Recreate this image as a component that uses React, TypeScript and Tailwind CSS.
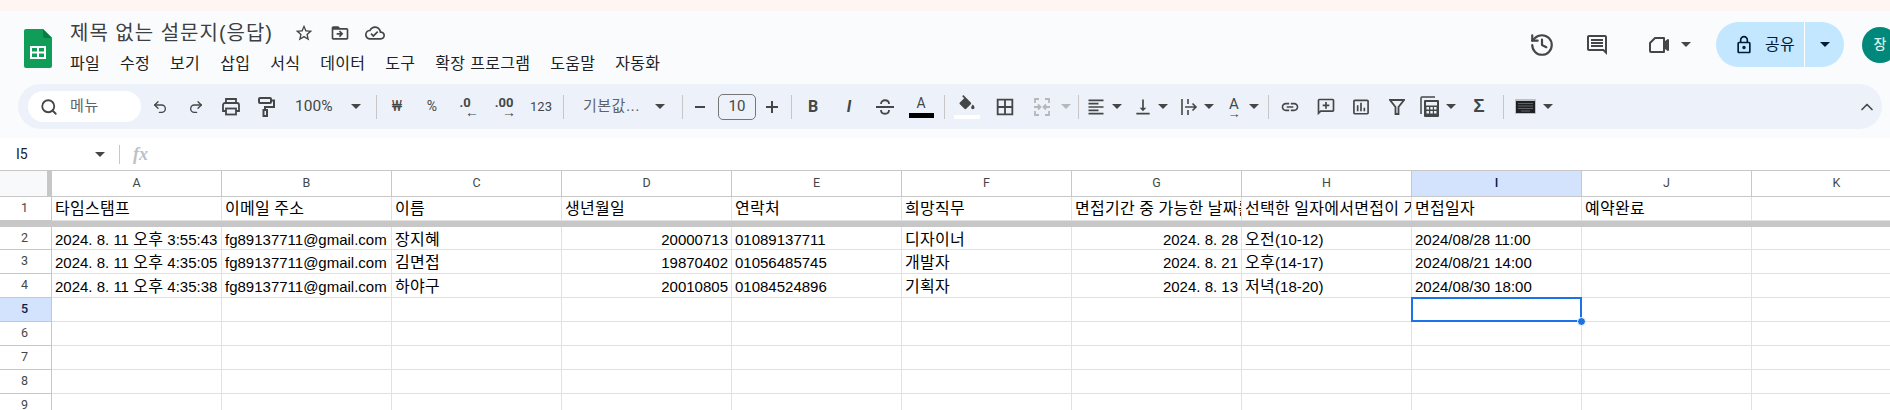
import type { ReactNode } from "react"
import { ChevronUp, History, Redo2, Search, Undo2 } from "lucide-react"

const Caret = ({ className = "fill-[#444746]" }: { className?: string }) => (
    <svg width="10" height="5" viewBox="0 0 10 5" className={className}>
        <path d="M0 0h10L5 5z" />
    </svg>
)

// material style icon, filled path on a 24 box
const Mi = ({ d, size = 20, className = "fill-[#444746]" }: { d: string; size?: number; className?: string }) => (
    <svg width={size} height={size} viewBox="0 0 24 24" className={className}>
        <path d={d} />
    </svg>
)

const Slot = ({ className, children }: { className: string; children?: ReactNode }) => (
    <div className={`flex h-full shrink-0 items-center justify-center ${className}`}>{children}</div>
)

const Sep = ({ className }: { className: string }) => (
    <Slot className={className}>
        <div className="h-[24px] w-px bg-[#c7c7c7]"></div>
    </Slot>
)

const icons = {
    star: "M22 9.24l-7.19-.62L12 2 9.19 8.63 2 9.24l5.46 4.73L5.82 21 12 17.27 18.18 21l-1.63-7.03L22 9.24zM12 15.4l-3.76 2.27 1-4.28-3.32-2.88 4.38-.38L12 6.1l1.71 4.04 4.38.38-3.32 2.88 1 4.28L12 15.4z",
    folder: "M20 6h-8l-2-2H4c-1.1 0-2 .9-2 2v12c0 1.1.9 2 2 2h16c1.1 0 2-.9 2-2V8c0-1.1-.9-2-2-2zm0 12H4V8h16v10zm-8.01-9l-1.41 1.41L12.16 12H8v2h4.16l-1.59 1.59L11.99 17 16 13.01 11.99 9z",
    cloud: "M19.35 10.04C18.67 6.59 15.64 4 12 4 9.11 4 6.6 5.64 5.35 8.04 2.34 8.36 0 10.91 0 14c0 3.31 2.69 6 6 6h13c2.76 0 5-2.24 5-5 0-2.64-2.05-4.78-4.65-4.96zM19 18H6c-2.21 0-4-1.79-4-4 0-2.05 1.53-3.76 3.56-3.97l1.07-.11.5-.95C8.08 7.14 9.94 6 12 6c2.62 0 4.88 1.86 5.39 4.43l.3 1.5 1.53.11c1.56.1 2.78 1.41 2.78 2.96 0 1.65-1.35 3-3 3zm-9-3.82l-2.09-2.09L6.5 13.5 10 17l6.01-6.01-1.41-1.41z",
    comment: "M21.99 4c0-1.1-.89-2-1.99-2H4c-1.1 0-2 .9-2 2v12c0 1.1.9 2 2 2h14l4 4-.01-18zM20 4v13.17L18.83 16H4V4h16zM6 12h12v2H6zm0-3h12v2H6zm0-3h12v2H6z",
    lock: "M18 8h-1V6c0-2.76-2.24-5-5-5S7 3.24 7 6v2H6c-1.1 0-2 .9-2 2v10c0 1.1.9 2 2 2h12c1.1 0 2-.9 2-2V10c0-1.1-.9-2-2-2zM9 6c0-1.66 1.34-3 3-3s3 1.34 3 3v2H9V6zm9 14H6V10h12v10zm-6-3c1.1 0 2-.9 2-2s-.9-2-2-2-2 .9-2 2 .9 2 2 2z",
    fill: "M16.56 8.94L7.62 0 6.21 1.41l2.38 2.38-5.15 5.15c-.59.59-.59 1.54 0 2.12l5.5 5.5c.29.29.68.44 1.06.44s.77-.15 1.06-.44l5.5-5.5c.59-.58.59-1.53 0-2.12zM19 11.5s-2 2.17-2 3.5c0 1.1.9 2 2 2s2-.9 2-2c0-1.33-2-3.5-2-3.5z",
    borders: "M3 3v18h18V3H3zm8 16H5v-6h6v6zm0-8H5V5h6v6zm8 8h-6v-6h6v6zm0-8h-6V5h6v6z",
    align: "M15 15H3v2h12v-2zm0-8H3v2h12V7zM3 13h18v-2H3v2zm0 8h18v-2H3v2zM3 3v2h18V3H3z",
    valign: "M16 13h-3V3h-2v10H8l4 4 4-4zM4 19v2h16v-2H4z",
    link: "M3.9 12c0-1.71 1.39-3.1 3.1-3.1h4V7H7c-2.76 0-5 2.24-5 5s2.24 5 5 5h4v-1.9H7c-1.71 0-3.1-1.39-3.1-3.1zM8 13h8v-2H8v2zm9-6h-4v1.9h4c1.71 0 3.1 1.39 3.1 3.1s-1.39 3.1-3.1 3.1h-4V17h4c2.76 0 5-2.24 5-5s-2.24-5-5-5z",
    addComment: "M20 2H4c-1.1 0-2 .9-2 2v18l4-4h14c1.1 0 2-.9 2-2V4c0-1.1-.9-2-2-2zm0 14H5.17L4 17.17V4h16v12zm-9-2h2v-3h3V9h-3V6h-2v3H8v2h3z",
    chart: "M9 17H7v-7h2v7zm4 0h-2V7h2v10zm4 0h-2v-4h2v4zm2.5 2.1h-15V5h15v14.1zm0-16.1h-15c-1.1 0-2 .9-2 2v14c0 1.1.9 2 2 2h15c1.1 0 2-.9 2-2V5c0-1.1-.9-2-2-2z",
}

const SheetsLogo = () => (
    <svg width="28" height="39" viewBox="0 0 28 39" className="shrink-0">
        <path d="M2 0h17l9 9v28a2 2 0 0 1-2 2H2a2 2 0 0 1-2-2V2a2 2 0 0 1 2-2z" fill="#0f9d58" />
        <path d="M19 0l9 9h-7a2 2 0 0 1-2-2z" fill="#0b7a44" />
        <path d="M6 17h16v13H6zm2 2v3.5h5V19zm7 0v3.5h5V19zm-7 5.500V28h5v-3.500zm7 0V28h5v-3.500z" fill="#fff" fillRule="evenodd" />
    </svg>
)

const PaintIcon = () => (
    <svg width="18" height="20" viewBox="0 0 18 20" fill="none" stroke="#444746" strokeWidth="2">
        <rect x="2" y="1" width="12" height="5" rx="1" />
        <path d="M14 3.500h3V10H8v3" />
        <rect x="6.500" y="13" width="3.500" height="6" />
    </svg>
)

const PrintIcon = () => (
    <svg width="20" height="20" viewBox="0 0 20 20" fill="none" stroke="#444746" strokeWidth="1.800">
        <path d="M5 6V2h10v4" />
        <path d="M5 14H2V8a2 2 0 0 1 2-2h12a2 2 0 0 1 2 2v6h-3" />
        <rect x="5" y="11.500" width="10" height="6" />
    </svg>
)

const MeetIcon = () => (
    <svg width="24" height="24" viewBox="0 0 24 24" fill="none" stroke="#444746" strokeWidth="2" strokeLinejoin="round">
        <path d="M8 5h9v14H4a1 1 0 0 1-1-1V10z" />
        <path d="M17 10l4-3v10l-4-3z" fill="#444746" />
    </svg>
)

const MergeIcon = () => (
    <svg width="18" height="20" viewBox="0 0 18 20" fill="none" stroke="#b5b8bb" strokeWidth="1.800">
        <path d="M6 2H2v4M12 2h4v4M6 18H2v-4M12 18h4v-4" />
        <path d="M1 10h6M5 7.500L7.500 10 5 12.500M17 10h-6M13 7.500L10.500 10 13 12.500" />
    </svg>
)

const WrapIcon = () => (
    <svg width="18" height="18" viewBox="0 0 18 18" fill="none" stroke="#444746" strokeWidth="1.600">
        <path d="M2 1v16M8 1v5M8 12v5M5 9h11M12.500 5.500L16 9l-3.500 3.500" />
    </svg>
)

const StrikeIcon = () => (
    <svg width="18" height="18" viewBox="0 0 18 18" fill="none" stroke="#444746" strokeWidth="1.800">
        <path d="M5 6c0-5 8-5 8 0M0 9h18M5 12c0 5 8 5 8 0" />
    </svg>
)

const FilterIcon = () => (
    <svg width="16" height="18" viewBox="0 0 16 18" fill="none" stroke="#444746" strokeWidth="1.800">
        <path d="M1 2h14L9.500 9v7h-3V9z" />
    </svg>
)

const FunctionsIcon = () => (
    <svg width="20" height="22" viewBox="0 0 20 22" fill="none">
        <path d="M1 18V2a1 1 0 0 1 1-1h13" stroke="#444746" strokeWidth="1.500" />
        <rect x="4" y="4" width="15" height="17" rx="1" fill="#444746" />
        <rect x="6" y="6" width="11" height="3.500" fill="#edf2fa" />
        <path d="M6.500 11h2.500v2.500H6.500zM10.300 11h2.500v2.500h-2.500zM14 11h2.500v2.500H14zM6.500 15h2.500v2.500H6.500zM10.300 15h2.500v2.500h-2.500zM14 15h2.500v2.500H14z" fill="#edf2fa" />
    </svg>
)

const KeyboardIcon = () => (
    <svg width="21" height="15" viewBox="0 0 21 15">
        <rect width="21" height="15" rx="1" fill="#bdc1c6" />
        <rect x="1" y="2" width="19" height="12" fill="#202124" />
        <path d="M3 4h15v1H3zM3 6.500h15v1H3zM3 9h15v1H3zM6 11.500h9v1H6z" fill="#5f6368" />
    </svg>
)

const Toolbar = () => (
    <div className="ml-[18px] mr-[8px] flex h-[45px] items-center rounded-full bg-[#edf2fa] pl-[10px] text-[#444746]">
        <div className="flex h-[31px] w-[113px] shrink-0 items-center rounded-full bg-white pl-[12px]">
            <Search size={18} strokeWidth={2.4} className="text-[#444746]" />
            <span className="ml-[12px] text-[15px] tracking-[0.6px] text-[#5f6368]">메뉴</span>
        </div>
        <Slot className="w-[38px]"><Undo2 size={16} strokeWidth={2} /></Slot>
        <Slot className="w-[34px]"><Redo2 size={16} strokeWidth={2} /></Slot>
        <Slot className="w-[36px]"><PrintIcon /></Slot>
        <Slot className="w-[34px]"><PaintIcon /></Slot>
        <Slot className="w-[63px] justify-start pl-[12px] font-['Roboto',sans-serif] text-[15.500px]">100%</Slot>
        <Slot className="w-[20px]"><Caret /></Slot>
        <Sep className="w-[20px]" />
        <Slot className="w-[22px] font-['Roboto',sans-serif] text-[14px]">₩</Slot>
        <Slot className="w-[48px] font-['Roboto',sans-serif] text-[14px]">%</Slot>
        <Slot className="w-[24px]">
            <div className="flex flex-col items-center font-['Roboto',sans-serif] text-[13px] font-bold leading-[11px]">
                <span className="ml-[-6px]">.0</span>
                <span className="ml-[8px] text-[14px] leading-[8px]">←</span>
            </div>
        </Slot>
        <Slot className="w-[48px]">
            <div className="flex flex-col items-center font-['Roboto',sans-serif] text-[13px] font-bold leading-[11px]">
                <span>.00</span>
                <span className="ml-[10px] text-[14px] leading-[8px]">→</span>
            </div>
        </Slot>
        <Slot className="w-[26px] font-['Roboto',sans-serif] text-[13px]">123</Slot>
        <Sep className="w-[18px]" />
        <Slot className="w-[78px] justify-start overflow-hidden whitespace-nowrap pl-[11px] text-[15px] tracking-[0.5px] text-[#5f6368]">기본값...</Slot>
        <Slot className="w-[20px]"><Caret /></Slot>
        <Sep className="w-[24px]" />
        <Slot className="w-[12px]"><div className="h-[2px] w-[10px] bg-[#444746]"></div></Slot>
        <div className="ml-[12px] flex h-[26px] w-[38px] shrink-0 items-center justify-center rounded-[5px] border border-[#747775] font-['Roboto',sans-serif] text-[15px]">10</div>
        <Slot className="w-[32px]">
            <svg width="12" height="12" viewBox="0 0 12 12" className="fill-[#444746]"><path d="M5 0h2v5h5v2H7v5H5V7H0V5h5z" /></svg>
        </Slot>
        <Sep className="w-[6px]" />
        <Slot className="w-[38px] font-['Roboto',sans-serif] text-[16px] font-bold">B</Slot>
        <Slot className="w-[34px] font-['Roboto',sans-serif] text-[16px] font-bold italic">I</Slot>
        <Slot className="w-[38px]"><StrikeIcon /></Slot>
        <Slot className="w-[34px]">
            <div className="flex flex-col items-center">
                <span className="font-['Roboto',sans-serif] text-[14px] leading-[15px]">A</span>
                <div className="mt-[2px] h-[5px] w-[25px] bg-black"></div>
            </div>
        </Slot>
        <Sep className="w-[12px]" />
        <Slot className="w-[34px]">
            <div className="flex flex-col items-center">
                <Mi d={icons.fill} size={20} />
                <div className="h-[4px] w-[26px] bg-white"></div>
            </div>
        </Slot>
        <Slot className="w-[42px]"><Mi d={icons.borders} size={22} /></Slot>
        <Slot className="w-[32px]"><MergeIcon /></Slot>
        <Slot className="w-[16px]"><Caret className="fill-[#b5b8bb]" /></Slot>
        <Sep className="w-[8px]" />
        <Slot className="w-[28px]"><Mi d={icons.align} /></Slot>
        <Slot className="w-[14px]"><Caret /></Slot>
        <Slot className="ml-[7px] w-[24px]"><Mi d={icons.valign} /></Slot>
        <Slot className="ml-[1px] w-[14px]"><Caret /></Slot>
        <Slot className="ml-[7px] w-[24px]"><WrapIcon /></Slot>
        <Slot className="ml-[1px] w-[14px]"><Caret /></Slot>
        <Slot className="ml-[6px] w-[24px]">
            <div className="flex flex-col items-center">
                <span className="font-['Roboto',sans-serif] text-[15px] leading-[14px]">A</span>
                <span className="h-[6px] font-['Roboto',sans-serif] text-[13px] leading-[6px]">→</span>
            </div>
        </Slot>
        <Slot className="ml-[1px] w-[14px]"><Caret /></Slot>
        <Sep className="w-[14px]" />
        <Slot className="w-[30px]"><Mi d={icons.link} /></Slot>
        <Slot className="w-[42px]"><Mi d={icons.addComment} /></Slot>
        <Slot className="w-[28px]"><Mi d={icons.chart} /></Slot>
        <Slot className="w-[44px]"><FilterIcon /></Slot>
        <Slot className="w-[22px]"><FunctionsIcon /></Slot>
        <Slot className="w-[20px]"><Caret /></Slot>
        <Slot className="w-[36px] font-['Liberation_Sans',sans-serif] text-[19px] font-bold">Σ</Slot>
        <Sep className="w-[12px]" />
        <Slot className="w-[32px]"><KeyboardIcon /></Slot>
        <Slot className="w-[14px]"><Caret /></Slot>
        <div className="ml-auto mr-[3px] flex h-full w-[24px] items-center justify-center">
            <ChevronUp size={20} strokeWidth={2} />
        </div>
    </div>
)

const menus = ["파일", "수정", "보기", "삽입", "서식", "데이터", "도구", "확장 프로그램", "도움말", "자동화"]

const Header = () => (
    <div className="flex h-[73px] items-start">
        <div className="ml-[24px] mt-[18px]">
            <SheetsLogo />
        </div>
        <div className="ml-[18px]">
            <div className="mt-[6px] flex h-[32px] items-center">
                <span className="w-[203px] whitespace-nowrap text-[20px] tracking-[1px] text-[#3c4043]">제목 없는 설문지(응답)</span>
                <div className="ml-[21px]"><Mi d={icons.star} /></div>
                <div className="ml-[16px]"><Mi d={icons.folder} /></div>
                <div className="ml-[15px]"><Mi d={icons.cloud} /></div>
            </div>
            <div className="mt-[3px] flex h-[24px] items-center gap-[20px] text-[16px] tracking-[0.3px] text-[#202124]">
                {menus.map((m) => (
                    <span key={m} className="whitespace-nowrap">{m}</span>
                ))}
            </div>
        </div>
        <div className="ml-auto mr-[-8px] mt-[11px] flex h-[45px] items-center">
            <History size={26} strokeWidth={2} className="text-[#444746]" />
            <div className="ml-[30px]"><Mi d={icons.comment} size={24} /></div>
            <div className="ml-[38px]"><MeetIcon /></div>
            <div className="ml-[10px]"><Caret /></div>
            <div className="ml-[25px] flex h-[45px] w-[128px] items-center rounded-full bg-[#c2e7ff] text-[#001d35]">
                <div className="flex h-full w-[89px] items-center border-r border-white pl-[18px]">
                    <Mi d={icons.lock} size={20} className="fill-[#001d35]" />
                    <span className="ml-[11px] text-[16px] tracking-[0.3px]">공유</span>
                </div>
                <div className="flex flex-1 items-center justify-center">
                    <Caret className="fill-[#001d35]" />
                </div>
            </div>
            <div className="ml-[18px] flex h-[36px] w-[36px] items-center justify-center rounded-full bg-[#00897b] text-[14px] font-medium text-[#d5f0ec]">장</div>
        </div>
    </div>
)

const FormulaBar = () => (
    <div className="flex h-[32px] items-center bg-white">
        <span className="ml-[16px] w-[79px] font-['Roboto',sans-serif] text-[14px] text-[#202124]">I5</span>
        <Caret />
        <div className="ml-[14px] h-[19px] w-px bg-[#c7c7c7]"></div>
        <span className="ml-[13px] font-['Liberation_Serif',serif] text-[18px] font-bold italic text-[#bdc1c6]">fx</span>
    </div>
)

const columns = ["A", "B", "C", "D", "E", "F", "G", "H", "I", "J", "K"]

type Row = { n: number; cells: (string | { right: string })[] }

const rows: Row[] = [
    { n: 2, cells: ["2024. 8. 11 오후 3:55:43", "fg89137711@gmail.com", "장지혜", { right: "20000713" }, "01089137711", "디자이너", { right: "2024. 8. 28" }, "오전(10-12)", "2024/08/28 11:00", "", ""] },
    { n: 3, cells: ["2024. 8. 11 오후 4:35:05", "fg89137711@gmail.com", "김면접", { right: "19870402" }, "01056485745", "개발자", { right: "2024. 8. 21" }, "오후(14-17)", "2024/08/21 14:00", "", ""] },
    { n: 4, cells: ["2024. 8. 11 오후 4:35:38", "fg89137711@gmail.com", "하야구", { right: "20010805" }, "01084524896", "기획자", { right: "2024. 8. 13" }, "저녁(18-20)", "2024/08/30 18:00", "", ""] },
]

const titles = ["타임스탬프", "이메일 주소", "이름", "생년월일", "연락처", "희망직무", "면접기간 중 가능한 날짜를 선택해주세요", "선택한 일자에서면접이 가능한 시간", "면접일자", "예약완료", ""]

// hangul runs are a bit wider in the sheet than the latin around them
const Ko = ({ text }: { text: string }) => (
    <>
        {text.split(/([가-힣]+)/).map((part, i) =>
            i % 2 === 1 ? <span key={i} className="text-[16px] tracking-[0.3px]">{part}</span> : part
        )}
    </>
)

const Cell = ({ text = "", right, title }: { text?: string; right?: boolean; title?: boolean }) => (
    <div className={`w-[170px] shrink-0 overflow-hidden whitespace-nowrap border-r border-b border-[#e1e1e1] px-[3px] text-[15px] leading-[22px] text-black ${title ? "pt-px" : "pt-[2px]"} ${right ? "text-right" : ""}`}>
        <Ko text={text} />
    </div>
)

const RowHead = ({ n, active }: { n: number; active?: boolean }) => (
    <div className={`flex w-[52px] shrink-0 items-center justify-center border-r border-b border-[#c7c7c7] pr-[2px] font-['Roboto',sans-serif] text-[12.500px] ${active ? "bg-[#d3e3fd] font-medium text-[#041e49]" : "text-[#444746]"}`}>
        {n}
    </div>
)

const Grid = () => (
    <div className="border-t border-[#c7c7c7]">
        <div className="flex h-[26px]">
            <div className="flex w-[52px] shrink-0 justify-end border-b border-[#c7c7c7] bg-[#f8f9fa]">
                <div className="h-full w-[5px] bg-[#c7c7c7]"></div>
            </div>
            {columns.map((c) => (
                <div key={c} className={`flex w-[170px] shrink-0 items-center justify-center border-r border-b border-[#c7c7c7] font-['Roboto',sans-serif] text-[12.500px] ${c === "I" ? "bg-[#d3e3fd] font-medium text-[#041e49]" : "text-[#444746]"}`}>
                    {c}
                </div>
            ))}
        </div>
        <div className="flex h-[24px]">
            <RowHead n={1} />
            {titles.map((t, i) => (
                <Cell key={i} text={t} title />
            ))}
        </div>
        <div className="h-[6px] bg-[#c7c7c7]"></div>
        {rows.map((r) => (
            <div key={r.n} className={`flex ${r.n === 2 ? "h-[23px]" : "h-[24px]"}`}>
                <RowHead n={r.n} />
                {r.cells.map((c, i) =>
                    typeof c === "string" ? <Cell key={i} text={c} /> : <Cell key={i} text={c.right} right />
                )}
            </div>
        ))}
        {[5, 6, 7, 8, 9].map((n) => (
            <div key={n} className="flex h-[24px]">
                <RowHead n={n} active={n === 5} />
                {columns.map((c) =>
                    n === 5 && c === "I" ? (
                        <div key={c} className="relative w-[170px] shrink-0 border-r border-b border-[#e1e1e1]">
                            <div className="absolute inset-[-1px] border-2 border-[#1a73e8]"></div>
                            <div className="absolute bottom-[-5px] right-[-5px] h-[9px] w-[9px] rounded-full border border-white bg-[#1a73e8]"></div>
                        </div>
                    ) : (
                        <Cell key={c} />
                    )
                )}
            </div>
        ))}
    </div>
)

export default function App() {
    return (
        <div className="h-[410px] w-[1890px] overflow-hidden bg-white font-['Liberation_Sans','Noto_Sans_CJK_KR',sans-serif]">
            <div className="h-[11px] bg-[#fff5f2]"></div>
            <div className="h-[127px] bg-[#f9fbfd]">
                <Header />
                <Toolbar />
            </div>
            <FormulaBar />
            <Grid />
        </div>
    )
}
